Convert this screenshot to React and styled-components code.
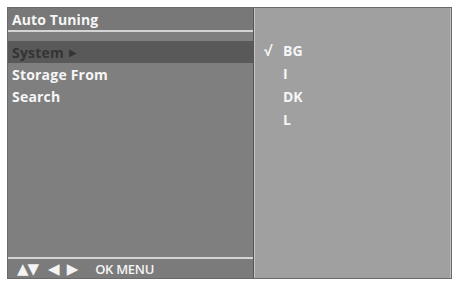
import React from 'react'
import styled, { createGlobalStyle } from 'styled-components'

const GlobalStyle = createGlobalStyle`
  body {
    margin: 0;
    background: #ffffff;
    font-family: "Open Sans", "DejaVu Sans", sans-serif;
  }
`

const Screen = styled.div`
  display: flex;
  margin: 7px 0 0 7px;
  width: 445px;
  height: 272px;
  border: 1px solid #6a6a6a;
  box-sizing: border-box;
`

const LeftPanel = styled.div`
  display: flex;
  flex-direction: column;
  width: 245px;
  background: #7f7f7f;
`

const TitleBar = styled.div`
  height: 22px;
  padding-left: 4px;
  display: flex;
  align-items: center;
  background: #787878;
  color: #f6f6f6;
  font-size: 14px;
  font-weight: 700;
  letter-spacing: 0.1px;
`

const Rule = styled.div`
  height: 2px;
  background: #d4d4d4;
`

const Menu = styled.div`
  flex: 1;
  padding-top: 9px;
  display: flex;
  flex-direction: column;
`

const MenuRow = styled.div`
  height: 22px;
  padding-left: 4px;
  display: flex;
  align-items: center;
  gap: 5px;
  font-size: 14px;
  font-weight: 700;
  letter-spacing: 0.2px;
  color: ${(props) => (props.active ? '#343434' : '#f6f6f6')};
  background: ${(props) => (props.active ? '#595959' : 'transparent')};
`

const Arrow = styled.span`
  font-size: 10px;
`

const Footer = styled.div`
  height: 19px;
  display: flex;
  align-items: center;
  padding-left: 9px;
  gap: 8px;
  color: #f4f4f4;
  font-size: 13px;
  font-weight: 600;
  letter-spacing: -0.3px;
  background: #7b7b7b;
`

const Keys = styled.span`
  font-size: 15px;
  line-height: 1;
  letter-spacing: -1px;
  margin-right: ${(props) => props.gap || 0}px;
`

const RightPanel = styled.div`
  flex: 1;
  background: #a0a0a0;
  border-left: 1px solid #555555;
  box-shadow: inset 1px 0 #c4c4c4, inset -1px 0 #c0c0c0;
  padding-top: 31px;
  display: flex;
  flex-direction: column;
`

const Option = styled.div`
  height: 23px;
  display: flex;
  align-items: center;
  padding-left: 10px;
  color: #f6f6f6;
  font-size: 14px;
  font-weight: 700;
`

const Check = styled.span`
  width: 19px;
  font-size: 14px;
`

const systems = ['BG', 'I', 'DK', 'L']

const App = () => (
  <>
    <GlobalStyle />
    <Screen>
      <LeftPanel>
        <TitleBar>Auto Tuning</TitleBar>
        <Rule />
        <Menu>
          <MenuRow active>
            System <Arrow>▶</Arrow>
          </MenuRow>
          <MenuRow>Storage From</MenuRow>
          <MenuRow>Search</MenuRow>
        </Menu>
        <Rule />
        <Footer>
          <Keys gap={2}>▲▼</Keys>
          <Keys>◀</Keys>
          <Keys gap={10}>▶</Keys>
          <span>OK MENU</span>
        </Footer>
      </LeftPanel>
      <RightPanel>
        {systems.map((s, i) => (
          <Option key={s}>
            <Check>{i === 0 ? '√' : ''}</Check>
            {s}
          </Option>
        ))}
      </RightPanel>
    </Screen>
  </>
)

export default App
